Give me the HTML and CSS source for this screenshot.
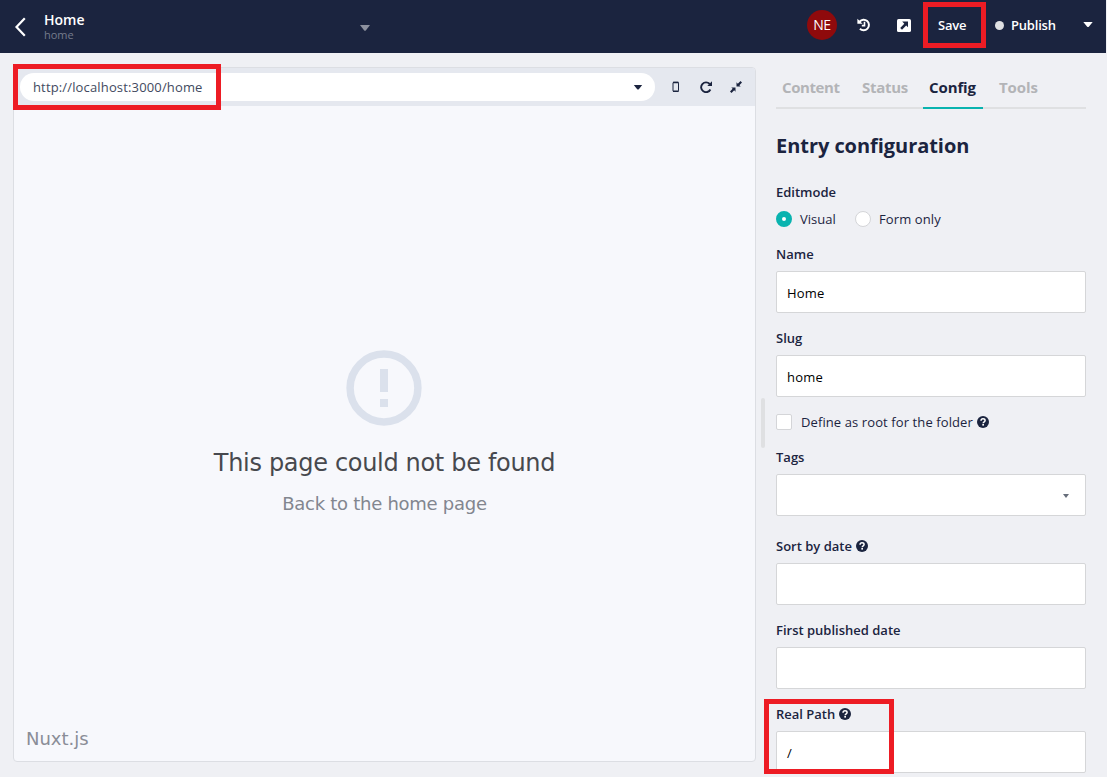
FILE: index.html
```html
<!DOCTYPE html>
<html lang="en">
<head>
<meta charset="utf-8">
<title>Home</title>
<link rel="stylesheet" href="styles.css">
</head>
<body>
<svg class="defs" width="0" height="0">
  <symbol id="help" viewBox="0 0 12 12">
    <circle cx="6" cy="6" r="6" fill="#1b243f"/>
    <path d="M4 4.700C4.100 3.400 4.900 2.800 6 2.800c1.200 0 2.100.7 2.100 1.700C8.100 5.800 6.200 5.800 6.200 7.200" fill="none" stroke="#fff" stroke-width="1.500"/>
    <rect x="5.300" y="8" width="1.700" height="1.600" fill="#fff"/>
  </symbol>
</svg>
<header class="topbar">
  <svg class="back" width="12" height="20" viewBox="0 0 12 20"><path d="M10.800 1.200 2.500 10l8.300 8.800" fill="none" stroke="#fff" stroke-width="2.200"/></svg>
  <div class="story">
    <div class="story-name">Home</div>
    <div class="story-slug">home</div>
  </div>
  <svg class="story-caret" width="10" height="6" viewBox="0 0 10 6"><path d="M0 0h10L6 5.300Q5 6.300 4 5.300z" fill="#8d919f"/></svg>
  <div class="actions">
    <div class="avatar">NE</div>
    <svg class="history" width="14" height="14" viewBox="0 0 14 14"><path d="M2.600 3.600A5.300 5.300 0 1 1 2.900 10.800" fill="none" stroke="#fff" stroke-width="2"/><path d="M.4.8v5h5.200z" fill="#fff"/><path d="M7.500 3.800v3.800H4.800" fill="none" stroke="#fff" stroke-width="1.600"/></svg>
    <svg class="external" width="14" height="13" viewBox="0 0 14 13"><rect width="14" height="13" rx="1.600" fill="#fff"/><path d="M5.200 2.500h5.800v5.800L9.200 6.500 5 10.700 3.200 8.900 7.300 4.700z" fill="#1b243f"/></svg>
    <div class="save">Save</div>
    <span class="dot"></span>
    <div class="publish">Publish</div>
    <svg class="menu-caret" width="10" height="6" viewBox="0 0 10 6"><path d="M.3 0h9.400L6 4.600Q5 5.600 4 4.600z" fill="#fff"/></svg>
  </div>
</header>
<main class="workspace">
  <section class="preview">
    <div class="toolbar">
      <div class="address"><span class="url">http://localhost:3000/home</span>
        <svg width="10" height="5" viewBox="0 0 10 5"><path d="M.8 0h8.400L6 4Q5 5 4 4z" fill="#1b243f"/></svg>
      </div>
      <svg class="phone" width="8" height="12" viewBox="0 0 8 12"><rect x="1" y="1.300" width="5.500" height="9.200" rx=".8" fill="none" stroke="#1b243f" stroke-width="1"/><path d="M1 1.500h5.500M1 10.200h5.500" stroke="#1b243f" stroke-width="1.500"/></svg>
      <svg class="reload" width="12" height="12" viewBox="0 0 12 12"><path d="M9.700 3A4.900 4.900 0 1 0 10.400 8.500" fill="none" stroke="#1b243f" stroke-width="1.900"/><path d="M12 .3V5H7.300z" fill="#1b243f"/></svg>
      <svg class="compress" width="12" height="12" viewBox="0 0 12 12"><path d="M6.500 1.300v4.200h4.200L9.400 4.200 12 1.500 10.500 0 7.800 2.700zM5.500 10.700V6.500H1.300l1.300 1.300L0 10.500 1.500 12l2.700-2.700z" fill="#1b243f"/></svg>
    </div>
    <div class="page">
      <svg class="alert" width="76" height="76" viewBox="0 0 76 76"><circle cx="38" cy="38" r="33.900" fill="none" stroke="#dbe1ec" stroke-width="7.500"/><path d="M34 19h8v23h-8zM34 49h8v8h-8z" fill="#dbe1ec"/></svg>
      <div class="error-title">This page could not be found</div>
      <div class="error-link">Back to the home page</div>
      <div class="brand">Nuxt.js</div>
    </div>
  </section>
  <div class="gutter"><span class="grip"></span></div>
  <aside class="sidebar">
    <nav class="tabs">
      <span class="tab content">Content</span><span class="tab status">Status</span><span class="tab active">Config</span><span class="tab tools">Tools</span>
    </nav>
    <h1>Entry configuration</h1>
    <div class="label">Editmode</div>
    <div class="radios">
      <span class="radio on"></span><span class="visual">Visual</span>
      <span class="radio"></span><span class="form-only">Form only</span>
    </div>
    <div class="label">Name</div>
    <div class="field">Home</div>
    <div class="label">Slug</div>
    <div class="field">home</div>
    <div class="check"><span class="box"></span><span class="check-text">Define as root for the folder</span><svg class="help"><use href="#help"/></svg></div>
    <div class="label">Tags</div>
    <div class="field select"><svg width="6" height="4" viewBox="0 0 6 4"><path d="M0 0h6L3 4z" fill="#666d7a"/></svg></div>
    <div class="label gap">Sort by date<svg class="help"><use href="#help"/></svg></div>
    <div class="field"></div>
    <div class="label">First published date</div>
    <div class="field"></div>
    <div class="label">Real Path<svg class="help"><use href="#help"/></svg></div>
    <div class="field">/</div>
  </aside>
</main>
<div class="mark mark-url"></div>
<div class="mark mark-save"></div>
<div class="mark mark-path"></div>
</body>
</html>
```
FILE: styles.css
```css
* { box-sizing: border-box; }
body { margin: 0; width: 1107px; height: 777px; overflow: hidden; position: relative; background: #eff0f4; color: #1b243f; font: 13px/20px "Open Sans", "Noto Sans", sans-serif; }
svg { display: block; flex: none; }
.defs { position: absolute; }
span, div { white-space: nowrap; }

.topbar { width: 1106px; height: 53px; background: #1b243f; color: #fff; display: flex; align-items: flex-start; }
.back { margin: 17px 0 0 14px; }
.story { width: 316px; margin: 11px 0 0 18px; }
.story-name { font-size: 14px; line-height: 17px; font-weight: 600; }
.story-slug { font-size: 11px; line-height: 14px; color: #757b8c; }
.story-caret { margin-top: 25px; }
.actions { margin-left: auto; display: flex; align-items: center; height: 50px; padding-right: 13px; }
.avatar { width: 30px; height: 30px; border-radius: 50%; background: #8f0a0c; font-size: 14px; line-height: 30px; text-align: center; letter-spacing: -.5px; }
.history { margin-left: 20px; }
.external { margin-left: 26px; }
.save { margin-left: 27px; width: 30px; font-weight: 600; letter-spacing: -.2px; }
.dot { width: 9px; height: 9px; border-radius: 50%; background: #dfe0e2; margin-left: 27px; }
.publish { margin-left: 7px; width: 45px; font-weight: 600; letter-spacing: -.2px; }
.menu-caret { margin-left: 27px; }

.workspace { display: flex; height: 724px; }
.preview { width: 743px; height: 695px; margin: 14px 0 0 13px; border: 1px solid #dcdee3; border-radius: 4px; background: #f7f8fc; display: flex; flex-direction: column; overflow: hidden; flex: none; }
.toolbar { height: 38px; background: #e5e8ef; display: flex; align-items: center; padding-left: 6px; flex: none; }
.address { width: 635px; height: 28px; border-radius: 14px; background: #fff; display: flex; align-items: center; justify-content: space-between; padding: 0 12px 0 13px; color: #424a60; }
.url { letter-spacing: .15px; }
.phone { margin-left: 17px; }
.reload { margin-left: 20px; }
.compress { margin-left: 18px; }
.page { flex: 1; display: flex; flex-direction: column; align-items: center; font-family: "DejaVu Sans", sans-serif; }
.alert { margin: 244px 1px 0 0; }
.error-title { font-size: 24px; line-height: 30px; margin-top: 22px; color: #47494e; letter-spacing: -.32px; }
.error-link { font-size: 18px; line-height: 24px; margin-top: 14px; color: #82868f; letter-spacing: -.27px; }
.brand { align-self: flex-start; margin: auto 0 10px 12px; font-size: 18px; line-height: 24px; color: #8a8d97; }

.gutter { width: 20px; padding: 345px 0 0 5px; flex: none; }
.grip { display: block; width: 4px; height: 50px; border-radius: 2px; background: #dfe0e2; }

.sidebar { width: 310px; padding-top: 15px; }
.tabs { height: 41px; border-bottom: 2px solid #dfe0e2; display: flex; color: #b3b4b7; font-size: 15px; font-weight: 700; line-height: 39px; letter-spacing: -.1px; }
.tab { height: 41px; }
.content { width: 80px; padding-left: 6px; letter-spacing: -.4px; }
.status { width: 67px; padding-left: 6px; letter-spacing: -.3px; }
.active { width: 60px; padding-left: 6px; color: #1b243f; border-bottom: 2px solid #09b3af; }
.tools { padding-left: 16px; }
h1 { margin: 22px 0 0; font-size: 20px; line-height: 30px; font-weight: 700; letter-spacing: -.05px; }
.label { display: flex; align-items: center; height: 20px; margin-top: 15px; font-weight: 600; }
h1 + .label { margin-top: 21px; }
.radios { display: flex; align-items: center; height: 20px; margin-top: 7px; }
.radios + .label { margin-top: 15px; }
.radio { width: 16px; height: 16px; border: 1px solid #d4d5d8; border-radius: 50%; background: #fff; }
.radio.on { border: 6px solid #09b3af; }
.visual { width: 38px; margin: 0 17px 0 8px; }
.form-only { margin-left: 8px; letter-spacing: .1px; }
.field { height: 42px; margin-top: 7px; border: 1px solid #d5d6d8; border-radius: 2px; background: #fff; padding: 1px 10px 0; line-height: 40px; color: #000; letter-spacing: .2px; }
.check { display: flex; align-items: center; height: 20px; margin-top: 15px; }
.box { width: 16px; height: 16px; border: 1px solid #d4d5d8; border-radius: 2px; background: #fff; margin-right: 9px; }
.check-text { width: 172px; letter-spacing: .1px; }
.help { width: 12px; height: 12px; margin-left: 4px; }
.select { display: flex; align-items: center; justify-content: flex-end; padding-right: 16px; }
.label.gap { margin-top: 20px; }

.mark { position: absolute; border: 5px solid #ed1c24; }
.mark-url { left: 13px; top: 64px; width: 208px; height: 46px; }
.mark-save { left: 923px; top: 2px; width: 63px; height: 46px; }
.mark-path { left: 764px; top: 699px; width: 130px; height: 75px; }
```
